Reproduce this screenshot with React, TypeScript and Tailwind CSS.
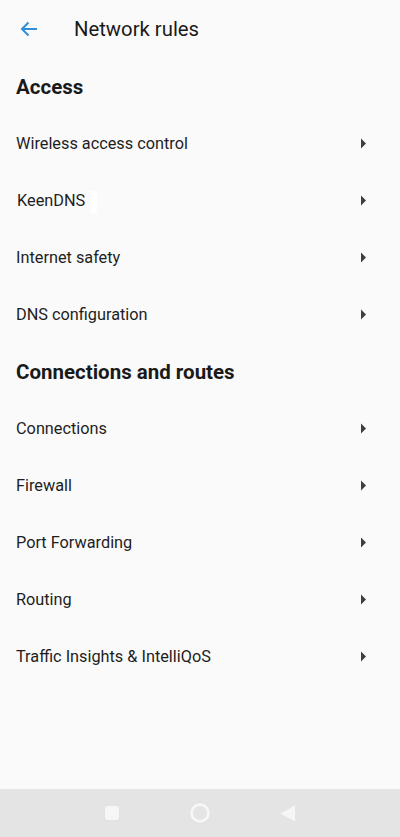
import React from 'react';

const access = ['Wireless access control', 'KeenDNS', 'Internet safety', 'DNS configuration'];
const routes = ['Connections', 'Firewall', 'Port Forwarding', 'Routing', 'Traffic Insights & IntelliQoS'];

function Chevron() {
  return (
    <svg width="7" height="11" viewBox="0 0 7 11" className="mr-[33px]">
      <path d="M1 0.5 L6 5.5 L1 10.5 Z" fill="#3d3d42" />
    </svg>
  );
}

function Row({ label }: { label: string }) {
  return (
    <div className="h-[57px] flex items-center justify-between pl-4">
      <div className="flex items-center pt-[2px]">
        <span className={label === 'KeenDNS' ? 'ml-[1px]' : ''}>{label}</span>
        {/* odd white block after KeenDNS in the original */}
        {label === 'KeenDNS' && <span className="ml-[6px] w-[6px] h-[22px] bg-white" />}
      </div>
      <Chevron />
    </div>
  );
}

function Section({ title, items }: { title: string; items: string[] }) {
  return (
    <div>
      <div className="h-[57px] flex items-center pl-4 pt-[2px] text-[20.5px] font-bold text-[#1a1a1a]">{title}</div>
      {items.map((item) => (
        <Row key={item} label={item} />
      ))}
    </div>
  );
}

export default function App() {
  return (
    <div
      className="w-[400px] h-[837px] bg-[#fafafa] flex flex-col text-[16.3px] text-[#1e1e1e]"
      style={{ fontFamily: 'Roboto, "Noto Sans", sans-serif' }}
    >
      {/* Top bar */}
      <div className="h-[58px] flex items-center">
        <svg width="18" height="16" viewBox="0 0 18 16" className="ml-[20px] mt-[-1px]">
          <path d="M17 8 H2 M8.5 1.5 L2 8 L8.5 14.5" stroke="#2f8fdb" strokeWidth="2" fill="none" />
        </svg>
        <span className="ml-[36px] text-[20.3px] text-[#1a1a1a]">Network rules</span>
      </div>

      <div className="flex-1">
        <Section title="Access" items={access} />
        <Section title="Connections and routes" items={routes} />
      </div>

      {/* Android nav bar */}
      <div className="h-[48px] bg-[#e4e4e4] flex items-center justify-center">
        <div className="w-[14px] h-[14px] rounded-[2px] bg-[#f6f6f6] shadow-[0_0_1px_rgba(0,0,0,0.1)]" />
        <div className="ml-[71px] w-[20px] h-[20px] rounded-full border-[3px] border-[#f6f6f6] shadow-[0_0_1px_rgba(0,0,0,0.15)]" />
        <svg width="15" height="17" viewBox="0 0 15 17" className="ml-[70px]">
          <path d="M15 0.5 V16.5 L0.5 8.5 Z" fill="#f6f6f6" />
        </svg>
      </div>
    </div>
  );
}
